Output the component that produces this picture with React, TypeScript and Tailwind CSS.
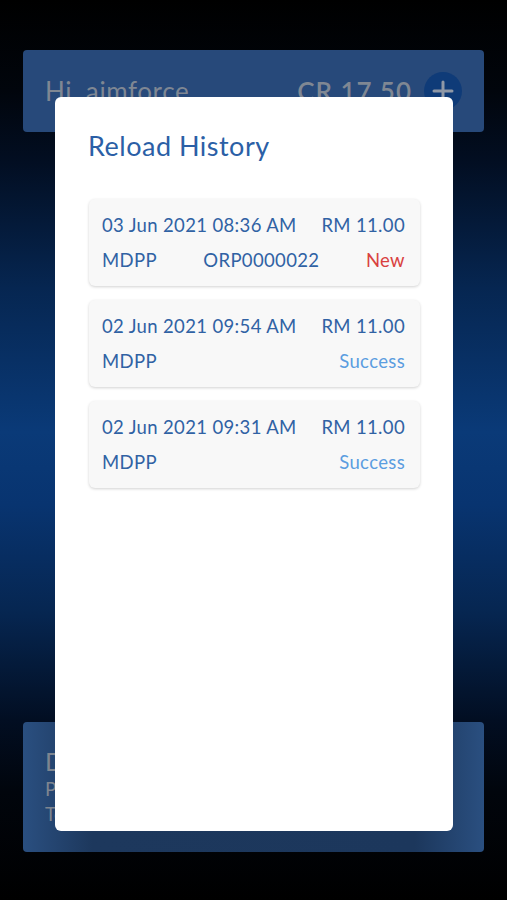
const records = [
  { date: "03 Jun 2021 08:36 AM", amount: "RM 11.00", method: "MDPP", ref: "ORP0000022", status: "New" },
  { date: "02 Jun 2021 09:54 AM", amount: "RM 11.00", method: "MDPP", ref: "", status: "Success" },
  { date: "02 Jun 2021 09:31 AM", amount: "RM 11.00", method: "MDPP", ref: "", status: "Success" },
];

function PlusCircle() {
  return (
    <div className="flex h-[38px] w-[38px] items-center justify-center rounded-full bg-[#0f3b78]">
      <svg width="24" height="24" viewBox="0 0 24 24" fill="none" stroke="#8f98a6" strokeWidth="3" strokeLinecap="round">
        <path d="M12 3v18M3 12h18" />
      </svg>
    </div>
  );
}

export default function App() {
  return (
    <div className="relative h-[900px] w-full overflow-hidden bg-[linear-gradient(180deg,#000000_0%,#01050c_10%,#020e22_18%,#062651_32%,#0a3a78_48%,#083470_56%,#062651_68%,#020e22_80%,#01050c_88%,#000000_100%)] font-['Lato',sans-serif]">
      {/* page behind the dialog */}
      <div className="flex h-full flex-col justify-between px-[23px] pb-[48px] pt-[50px]">
        <div className="flex h-[82px] items-center justify-between rounded bg-[#27497a] pl-[22px] pr-[22px]">
          <span className="text-[26px] tracking-[0.6px] text-[#7f8793]">Hi, aimforce</span>
          <div className="flex items-center gap-[12px]">
            <span className="text-[26px] font-semibold tracking-[1px] text-[#7f8793]">CR 17.50</span>
            <PlusCircle />
          </div>
        </div>
        <div className="flex h-[130px] flex-col rounded bg-[linear-gradient(90deg,#2a4f80_0%,#1d385d_15%,#1c375c_85%,#2a4f80_100%)] px-[22px] pt-[24px] text-[#7d8590]">
          <span className="text-[25px] leading-[30px]">Dashboard</span>
          <span className="text-[19px] leading-[26px]">Points</span>
          <span className="text-[19px] leading-[24px]">Total</span>
        </div>
      </div>

      {/* dialog */}
      <div className="absolute left-[55px] top-[97px] h-[734px] w-[398px] rounded-md bg-white px-[33px] pt-[34px]">
        <h2 className="text-[27px] leading-[30px] tracking-[0.5px] text-[#2b5fa6]">Reload History</h2>
        <div className="mt-[38px] flex flex-col gap-[14px] pl-[1px]">
          {records.map((r) => (
            <div
              key={r.date}
              className="flex flex-col gap-[11px] rounded-md bg-[#f8f8f8] pl-[13px] pr-[15px] py-[14px] text-[18.5px] leading-[24px] tracking-[0.35px] text-[#3062a4] shadow-[0_1px_3px_rgba(0,0,0,0.18)]"
            >
              <div className="flex justify-between">
                <span>{r.date}</span>
                <span>{r.amount}</span>
              </div>
              <div className="flex items-center justify-between">
                <span>{r.method}</span>
                {r.ref && <span>{r.ref}</span>}
                <span className={r.status === "New" ? "text-[#d9413f]" : "text-[#5b9de0]"}>{r.status}</span>
              </div>
            </div>
          ))}
        </div>
      </div>
    </div>
  );
}
